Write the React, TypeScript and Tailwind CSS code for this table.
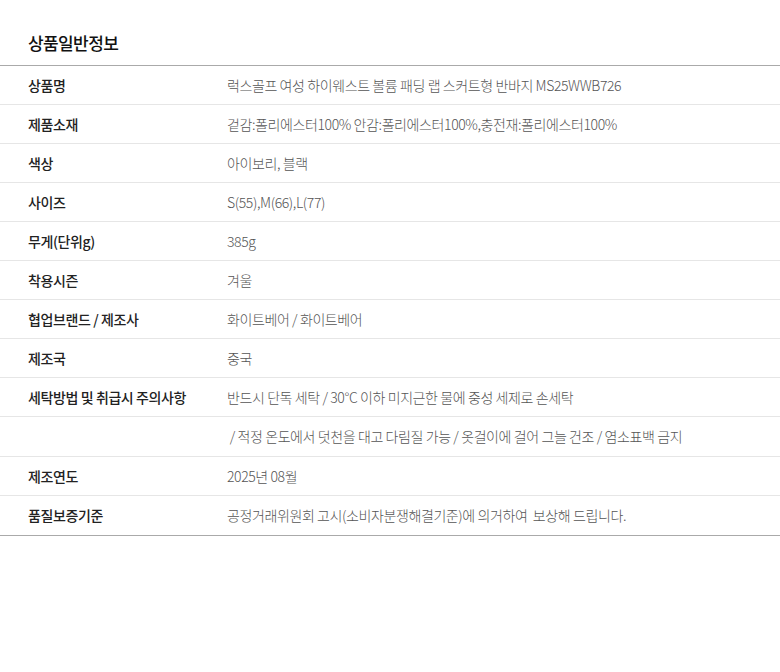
import React from "react";

const rows: [string, string][] = [
  ["상품명", "럭스골프 여성 하이웨스트 볼륨 패딩 랩 스커트형 반바지 MS25WWB726"],
  ["제품소재", "겉감:폴리에스터100% 안감:폴리에스터100%,충전재:폴리에스터100%"],
  ["색상", "아이보리, 블랙"],
  ["사이즈", "S(55),M(66),L(77)"],
  ["무게(단위g)", "385g"],
  ["착용시즌", "겨울"],
  ["협업브랜드 / 제조사", "화이트베어 / 화이트베어"],
  ["제조국", "중국"],
  ["세탁방법 및 취급시 주의사항", "반드시 단독 세탁 / 30°C 이하 미지근한 물에 중성 세제로 손세탁"],
  ["", " / 적정 온도에서 덧천을 대고 다림질 가능 / 옷걸이에 걸어 그늘 건조 / 염소표백 금지"],
  ["제조연도", "2025년 08월"],
  ["품질보증기준", "공정거래위원회 고시(소비자분쟁해결기준)에 의거하여  보상해 드립니다."],
];

export default function App() {
  return (
    <div
      className="w-[780px] h-[672px] bg-white"
      style={{ fontFamily: '"Noto Sans CJK KR", "Noto Sans", sans-serif' }}
    >
      <div className="h-[65px] pt-[20px] flex items-center px-[28px]">
        <h2 className="text-[17px] font-medium text-[#111] tracking-[-0.6px]">상품일반정보</h2>
      </div>
      <div className="border-t border-[#aaaaaa] border-b">
        {rows.map(([k, v], i) => (
          <div
            key={i}
            className={`flex items-center ${i === 9 ? "h-[40px]" : "h-[39px]"} ${
              i === rows.length - 1 ? "" : "border-b border-[#e6e6e6]"
            }`}
          >
            <div className="w-[227px] pl-[28px] shrink-0 text-[14px] font-medium text-[#222] tracking-[-0.4px]">
              {k}
            </div>
            <div className="text-[14px] font-light text-[#555] tracking-[-0.4px] whitespace-pre">
              {v}
            </div>
          </div>
        ))}
      </div>
    </div>
  );
}
